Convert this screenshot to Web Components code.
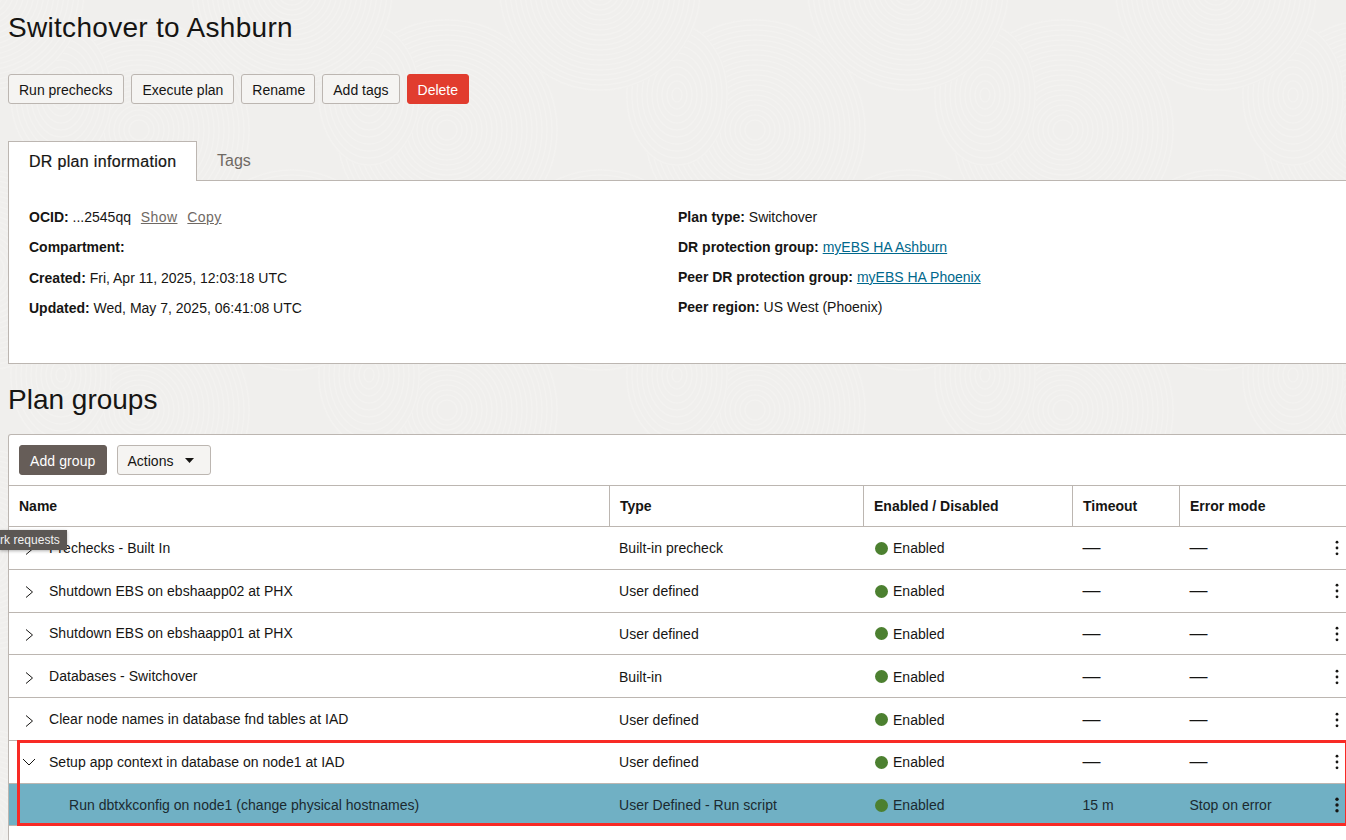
<!DOCTYPE html>
<html lang="en">
<head>
<meta charset="utf-8">
<title>Switchover to Ashburn</title>
<style>
html, body {
    margin: 0;
    height: 840px;
    overflow: hidden;
}
body {
    font-family: "Liberation Sans", Arial, sans-serif;
    color: #161513;
    background-color: #f0efed;
}
</style>
</head>
<body>
<dr-page>
    <page-title slot="title">Switchover to Ashburn</page-title>
    <action-button slot="actions" style="padding-right: 11px">Run prechecks</action-button>
    <action-button slot="actions">Execute plan</action-button>
    <action-button slot="actions" style="padding-right: 9px">Rename</action-button>
    <action-button slot="actions">Add tags</action-button>
    <action-button slot="actions" kind="danger">Delete</action-button>

    <info-tabs slot="info" active="DR plan information" other="Tags">
        <info-item slot="left" label="OCID:">...2545qq <info-action>Show</info-action> <info-action>Copy</info-action></info-item>
        <info-item slot="left" label="Compartment:"></info-item>
        <info-item slot="left" label="Created:">Fri, Apr 11, 2025, 12:03:18 UTC</info-item>
        <info-item slot="left" label="Updated:">Wed, May 7, 2025, 06:41:08 UTC</info-item>
        <info-item slot="right" label="Plan type:">Switchover</info-item>
        <info-item slot="right" label="DR protection group:"><info-link>myEBS HA Ashburn</info-link></info-item>
        <info-item slot="right" label="Peer DR protection group:"><info-link>myEBS HA Phoenix</info-link></info-item>
        <info-item slot="right" label="Peer region:">US West (Phoenix)</info-item>
    </info-tabs>

    <page-title slot="groups-title" level="2">Plan groups</page-title>

    <groups-table slot="groups">
        <action-button slot="tools" kind="primary">Add group</action-button>
        <action-button slot="tools" menu>Actions</action-button>
        <group-row toggle="closed" type="Built-in precheck">Prechecks - Built In</group-row>
        <group-row toggle="closed" type="User defined">Shutdown EBS on ebshaapp02 at PHX</group-row>
        <group-row toggle="closed" type="User defined">Shutdown EBS on ebshaapp01 at PHX</group-row>
        <group-row toggle="closed" type="Built-in">Databases - Switchover</group-row>
        <group-row toggle="closed" type="User defined">Clear node names in database fnd tables at IAD</group-row>
        <group-row toggle="open" type="User defined">Setup app context in database on node1 at IAD</group-row>
        <group-row selected type="User Defined - Run script" timeout="15 m" mode="Stop on error">Run dbtxkconfig on node1 (change physical hostnames)</group-row>
    </groups-table>
</dr-page>

<script>
const PAGE_TEMPLATE = document.createElement("template")
PAGE_TEMPLATE.innerHTML = `<style>
:host {
    display: block;
    position: relative;
    height: 840px;
    box-sizing: border-box;
    padding-left: 8px;
    overflow: hidden;
}
.texture {
    position: absolute;
    inset: 0;
    width: 100%;
    height: 100%;
    pointer-events: none;
}
.content {
    position: relative;
    width: 1500px;
}
.actions {
    display: flex;
    gap: 7px;
    margin-top: 30px;
}
.info {
    margin-top: 37px;
}
.groups-title {
    margin-top: 20px;
}
.groups {
    margin-top: 18px;
}
</style>
<svg class="texture"><defs><pattern id="swirl" patternUnits="userSpaceOnUse" x="192" y="0" width="308" height="280"></pattern></defs><rect width="100%" height="100%" fill="url(#swirl)"/></svg>
<div class="content">
    <slot name="title"></slot>
    <div class="actions"><slot name="actions"></slot></div>
    <div class="info"><slot name="info"></slot></div>
    <div class="groups-title"><slot name="groups-title"></slot></div>
    <div class="groups"><slot name="groups"></slot></div>
</div>`

// concentric rings, later ones cover the earlier ones like scales
const SWIRLS = [
    {x: 255, y: 130, rx: 110, ry: 110},
    {x: 255, y: 410, rx: 110, ry: 110},
    {x: -53, y: 130, rx: 110, ry: 110},
    {x: 177, y: 95, rx: 50, ry: 70},
    {x: 177, y: 375, rx: 50, ry: 70},
    {x: 100, y: -10, rx: 100, ry: 100},
    {x: 100, y: 270, rx: 100, ry: 100},
    {x: 408, y: -10, rx: 100, ry: 100},
    {x: 408, y: 270, rx: 100, ry: 100}
]

class DrPage extends HTMLElement {
    constructor(){
        super();
        this.attachShadow({mode: "open"});
        this.shadowRoot.appendChild(PAGE_TEMPLATE.content.cloneNode(true));
    }

    connectedCallback(){
        let out = ""
        for(let s of SWIRLS){
            out += `<ellipse cx="${s.x}" cy="${s.y}" rx="${s.rx}" ry="${s.ry}" fill="#f0efed" stroke="#f0efed" stroke-width="2"/>`
            for(let k = 1; k > 0.05; k -= 5 / s.rx){
                out += `<ellipse cx="${s.x}" cy="${s.y}" rx="${s.rx * k}" ry="${s.ry * k}" fill="none" stroke="#f3f2f0" stroke-width="1.6"/>`
            }
        }
        this.shadowRoot.getElementById("swirl").innerHTML = out
    }
}

const TITLE_TEMPLATE = document.createElement("template")
TITLE_TEMPLATE.innerHTML = `<style>
:host {
    display: block;
    font-size: 28px;
    line-height: 32px;
    padding-top: 12px;
    letter-spacing: 0.3px;
    color: #161513;
}
:host([level="2"]) {
    padding-top: 0;
    letter-spacing: 0;
}
</style><slot></slot>`

class PageTitle extends HTMLElement {
    constructor(){
        super();
        this.attachShadow({mode: "open"});
        this.shadowRoot.appendChild(TITLE_TEMPLATE.content.cloneNode(true));
    }
}

const BUTTON_TEMPLATE = document.createElement("template")
BUTTON_TEMPLATE.innerHTML = `<style>
:host {
    display: inline-flex;
    align-items: center;
    box-sizing: border-box;
    height: 30px;
    padding: 2px 10px 0;
    font-size: 14px;
    color: #161513;
    background: #f5f4f2;
    border: solid 1px #bcb6b1;
    border-radius: 3px;
    white-space: nowrap;
}
:host([kind="danger"]) {
    background: #e13c2e;
    border-color: #e13c2e;
    color: #fff;
}
:host([kind="primary"]) {
    background: #665d58;
    border-color: #665d58;
    color: #fff;
    letter-spacing: 0.1px;
}
svg {
    margin-left: 12px;
    margin-right: 6px;
    margin-top: -2px;
    display: none;
}
:host([menu]) svg {
    display: block;
}
</style><slot></slot><svg width="9" height="5" viewBox="0 0 10 5" preserveAspectRatio="none"><path d="M0 0h10L5 5z" fill="#161513"/></svg>`

class ActionButton extends HTMLElement {
    constructor(){
        super();
        this.attachShadow({mode: "open"});
        this.shadowRoot.appendChild(BUTTON_TEMPLATE.content.cloneNode(true));
    }
}

const TABS_TEMPLATE = document.createElement("template")
TABS_TEMPLATE.innerHTML = `<style>
:host {
    display: block;
}
.tabs {
    display: flex;
    height: 39px;
    position: relative;
    z-index: 1;
}
.tab {
    box-sizing: border-box;
    display: flex;
    align-items: center;
    font-size: 16px;
}
#active {
    width: 189px;
    height: 40px;
    padding-left: 20px;
    background: #fff;
    border: solid 1px #bcb6b1;
    border-bottom: 0;
    color: #161513;
    letter-spacing: 0.32px;
    -webkit-text-stroke: 0.2px #161513;
}
#other {
    padding-left: 20px;
    color: #6f6964;
}
.panel {
    box-sizing: border-box;
    height: 184px;
    background: #fff;
    border: solid 1px #bcb6b1;
    display: grid;
    grid-template-columns: 649px 1fr;
    padding: 26px 20px 0;
}
.col {
    display: flex;
    flex-direction: column;
    gap: 9px;
}
.col.left {
    gap: 9.4px;
}
</style>
<div class="tabs"><div class="tab" id="active"></div><div class="tab" id="other"></div></div>
<div class="panel">
    <div class="col left"><slot name="left"></slot></div>
    <div class="col"><slot name="right"></slot></div>
</div>`

class InfoTabs extends HTMLElement {
    constructor(){
        super();
        this.attachShadow({mode: "open"});
        this.shadowRoot.appendChild(TABS_TEMPLATE.content.cloneNode(true));
    }

    connectedCallback(){
        this.shadowRoot.getElementById("active").textContent = this.getAttribute("active")
        this.shadowRoot.getElementById("other").textContent = this.getAttribute("other")
    }
}

const ITEM_TEMPLATE = document.createElement("template")
ITEM_TEMPLATE.innerHTML = `<style>
:host {
    display: block;
    font-size: 14px;
    line-height: 21px;
    color: #161513;
    white-space: nowrap;
}
b {
    font-weight: 700;
}
</style><b></b> <slot></slot>`

class InfoItem extends HTMLElement {
    constructor(){
        super();
        this.attachShadow({mode: "open"});
        this.shadowRoot.appendChild(ITEM_TEMPLATE.content.cloneNode(true));
    }

    connectedCallback(){
        this.shadowRoot.querySelector("b").textContent = this.getAttribute("label")
    }
}

const INFO_ACTION_TEMPLATE = document.createElement("template")
INFO_ACTION_TEMPLATE.innerHTML = `<style>
:host {
    display: inline;
    color: #6f6964;
    text-decoration: underline;
    margin-left: 6px;
    letter-spacing: 0.4px;
}
</style><slot></slot>`

class InfoAction extends HTMLElement {
    constructor(){
        super();
        this.attachShadow({mode: "open"});
        this.shadowRoot.appendChild(INFO_ACTION_TEMPLATE.content.cloneNode(true));
    }
}

const INFO_LINK_TEMPLATE = document.createElement("template")
INFO_LINK_TEMPLATE.innerHTML = `<style>
:host {
    display: inline;
    color: #00688c;
    text-decoration: underline;
}
</style><slot></slot>`

class InfoLink extends HTMLElement {
    constructor(){
        super();
        this.attachShadow({mode: "open"});
        this.shadowRoot.appendChild(INFO_LINK_TEMPLATE.content.cloneNode(true));
    }
}

const TABLE_TEMPLATE = document.createElement("template")
TABLE_TEMPLATE.innerHTML = `<style>
:host {
    display: block;
    position: relative;
    background: #fff;
    border: solid 1px #bcb6b1;
    border-bottom: 0;
    border-radius: 3px 0 0 0;
    padding-bottom: 40px;
}
.tools {
    display: flex;
    gap: 10px;
    height: 50px;
    box-sizing: border-box;
    padding: 10px 10px 0;
}
.head {
    display: grid;
    grid-template-columns: 600px 254px 209px 107px 1fr;
    height: 42px;
    box-sizing: border-box;
    border-top: solid 1px #bcb6b1;
    border-bottom: solid 1px #bcb6b1;
    font-size: 14px;
    font-weight: 700;
}
.head div {
    display: flex;
    align-items: center;
    padding-left: 10px;
    border-left: solid 1px #bcb6b1;
}
.head div:first-child {
    border-left: 0;
}
.highlight {
    position: absolute;
    left: 8px;
    top: 305px;
    width: 1331px;
    height: 86px;
    box-sizing: border-box;
    border: solid 3px #f82a25;
    pointer-events: none;
}
.tip {
    position: absolute;
    left: -9px;
    top: 95px;
    width: 67px;
    height: 20px;
    box-sizing: border-box;
    background: #5b5754;
    color: #f2f2f2;
    font-size: 12px;
    letter-spacing: 0.05px;
    line-height: 20px;
    white-space: nowrap;
    box-shadow: 0 1px 3px rgba(0,0,0,.3);
}
</style>
<div class="tools"><slot name="tools"></slot></div>
<div class="head">
    <div>Name</div><div>Type</div><div>Enabled / Disabled</div><div>Timeout</div><div>Error mode</div>
</div>
<slot></slot>
<div class="highlight"></div>
<div class="tip">rk requests</div>`

class GroupsTable extends HTMLElement {
    constructor(){
        super();
        this.attachShadow({mode: "open"});
        this.shadowRoot.appendChild(TABLE_TEMPLATE.content.cloneNode(true));
    }
}

const ROW_TEMPLATE = document.createElement("template")
ROW_TEMPLATE.innerHTML = `<style>
:host {
    display: grid;
    grid-template-columns: 600px 254px 209px 107px 1fr;
    align-items: center;
    box-sizing: border-box;
    height: 42.8px;
    border-bottom: solid 1px #bcb6b1;
    font-size: 14px;
    letter-spacing: 0.03px;
    color: #161513;
}
:host([selected]) {
    background: #70b0c4;
    height: 42px;
    padding-top: 2px;
    color: #1b2a30;
}
.name {
    display: flex;
    align-items: center;
    padding-left: 14px;
}
.toggle {
    width: 26px;
    flex: none;
    display: flex;
}
.toggle svg {
    margin-top: 3px;
}
.toggle svg.open {
    margin: 0 0 0 -1px;
}
:host([selected]) .name {
    padding-left: 60px;
}
:host([selected]) .toggle {
    display: none;
}
.cell, .status, .last {
    margin-top: 1px;
}
:host([selected]) .cell, :host([selected]) .status, :host([selected]) .last {
    margin-top: 0;
}
.cell {
    padding-left: 10px;
}
#timeout {
    padding-left: 10.5px;
}
.status {
    display: flex;
    align-items: center;
    gap: 5.5px;
    padding-left: 11.5px;
}
.dot {
    width: 13px;
    height: 13px;
    border-radius: 50%;
    background: #4c8030;
}
.dash {
    font-size: 18px;
}
#timeout.dash {
    margin-top: 0;
}
#mode.dash {
    margin-top: -1px;
}
.last {
    display: flex;
    justify-content: space-between;
    align-items: center;
    padding-right: 168px;
    padding-left: 10.5px;
}
svg {
    display: block;
}
circle {
    r: 1.4px;
}
:host([selected]) circle {
    r: 1.7px;
}
</style>
<div class="name"><span class="toggle"></span><slot></slot></div>
<div class="cell" id="type"></div>
<div class="status"><span class="dot"></span>Enabled</div>
<div class="cell" id="timeout"></div>
<div class="last"><span id="mode"></span>
<svg width="4" height="16" viewBox="0 0 4 16" fill="#161513"><circle cx="2" cy="2.2" r="1.4"/><circle cx="2" cy="8" r="1.4"/><circle cx="2" cy="13.8" r="1.4"/></svg></div>`

const CLOSED_ICON = `<svg width="12" height="14" viewBox="0 0 12 14" fill="none" stroke="#161513"><path d="M3 1.5l6.5 5.5-6.5 5.5"/></svg>`
const OPEN_ICON = `<svg class="open" width="14" height="10" viewBox="0 0 14 10" fill="none" stroke="#161513"><path d="M1 2l6 6 6-6"/></svg>`

class GroupRow extends HTMLElement {
    constructor(){
        super();
        this.attachShadow({mode: "open"});
        this.shadowRoot.appendChild(ROW_TEMPLATE.content.cloneNode(true));
    }

    connectedCallback(){
        let root = this.shadowRoot
        let toggle = this.getAttribute("toggle")
        root.querySelector(".toggle").innerHTML = toggle == "open" ? OPEN_ICON : CLOSED_ICON
        root.getElementById("type").textContent = this.getAttribute("type")
        this.fillCell(root.getElementById("timeout"), this.getAttribute("timeout"))
        this.fillCell(root.getElementById("mode"), this.getAttribute("mode"))
    }

    fillCell(el, val){
        el.textContent = val || "—"
        el.classList.toggle("dash", !val)
    }
}

customElements.define("dr-page", DrPage)
customElements.define("page-title", PageTitle)
customElements.define("action-button", ActionButton)
customElements.define("info-tabs", InfoTabs)
customElements.define("info-item", InfoItem)
customElements.define("info-action", InfoAction)
customElements.define("info-link", InfoLink)
customElements.define("groups-table", GroupsTable)
customElements.define("group-row", GroupRow)
</script>
</body>
</html>
